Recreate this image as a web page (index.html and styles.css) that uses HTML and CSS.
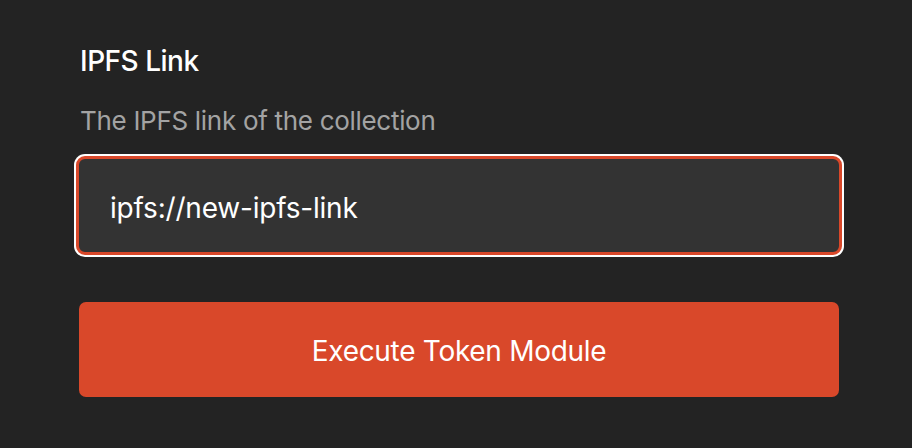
FILE: index.html
```html
<!DOCTYPE html>
<html lang="en">
<head>
<meta charset="utf-8">
<title>IPFS Link</title>
<link rel="stylesheet" href="styles.css">
</head>
<body>
<main class="form">
  <label class="field-label" for="ipfs">IPFS Link</label>
  <p class="field-help">The IPFS link of the collection</p>
  <div class="input-wrap">
    <input class="field-input" id="ipfs" type="text" value="ipfs://new-ipfs-link">
  </div>
  <button class="submit" type="button">Execute Token Module</button>
</main>
</body>
</html>
```

FILE: styles.css
```css
* { box-sizing: border-box; }
html, body {
  margin: 0;
  background: #232323;
}
body {
  font-family: Inter, "Noto Sans", sans-serif;
  color: #ffffff;
}
.form {
  display: flex;
  flex-direction: column;
  padding: 44px 73px 0 79px;
}
.field-label {
  display: block;
  font-size: 28px;
  font-weight: 500;
  line-height: 34px;
  letter-spacing: -0.5px;
  margin-left: 1px;
}
.field-help {
  margin: 27px 0 0 1px;
  font-size: 26px;
  line-height: 32px;
  color: #a3a3a3;
  letter-spacing: -0.3px;
}
.input-wrap {
  margin-top: 19px;
  margin-left: -3px;
  width: 766px;
  height: 99px;
  border: 3px solid #d9482a;
  border-radius: 9px;
  box-shadow: 0 0 0 2px #ffffff;
  background: #333333;
  display: flex;
}
.field-input {
  flex: 1;
  min-width: 0;
  border: 0;
  outline: none;
  background: transparent;
  color: #ffffff;
  font-family: inherit;
  font-size: 28px;
  letter-spacing: -0.2px;
  padding: 4px 30px 0 31px;
  border-radius: 6px;
}
.submit {
  margin-top: 47px;
  width: 760px;
  height: 95px;
  border: 0;
  border-radius: 7px;
  background: #d9482a;
  color: #ffffff;
  font-family: inherit;
  font-size: 28px;
  font-weight: 400;
  letter-spacing: -0.3px;
  padding-top: 4px;
  cursor: pointer;
}
```
